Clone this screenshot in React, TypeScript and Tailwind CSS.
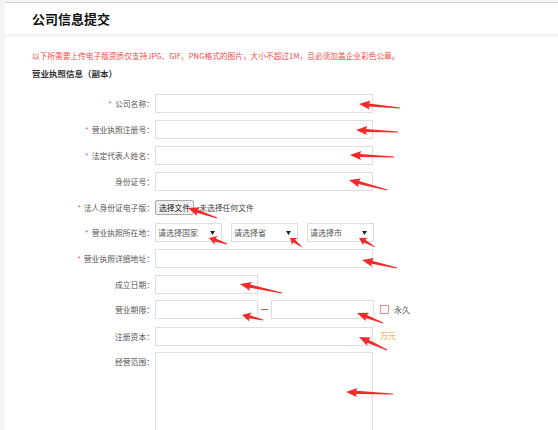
import React from 'react'

const font = { fontFamily: '"Noto Sans CJK SC", "Noto Sans", sans-serif' }

// 箭头：[尾x, 尾y, 尖x, 尖y]
const arrows: [number, number, number, number][] = [
  [400, 108, 359, 104],
  [398, 132, 356, 130],
  [394, 157, 350, 155],
  [387, 190, 349, 180],
  [217, 218, 188, 208],
  [227, 244, 209, 238],
  [302, 247, 290, 238],
  [375, 247, 359, 238],
  [397, 268, 362, 260],
  [282, 293, 240, 284],
  [263, 320, 242, 315],
  [383, 323, 357, 313],
  [387, 350, 359, 337],
  [393, 394, 346, 392],
]

function arrowPoints([tx, ty, px, py]: [number, number, number, number]) {
  const dx = px - tx
  const dy = py - ty
  const len = Math.hypot(dx, dy)
  const ux = dx / len
  const uy = dy / len
  const nx = -uy
  const ny = ux
  const head = Math.min(11, len * 0.4)
  const bx = px - ux * head
  const by = py - uy * head
  const pts = [
    [tx + nx * 0.4, ty + ny * 0.4],
    [bx + ux * 1 + nx * 1.6, by + uy * 1 + ny * 1.6],
    [bx + nx * 4.5, by + ny * 4.5],
    [px, py],
    [bx - nx * 4.5, by - ny * 4.5],
    [bx + ux * 1 - nx * 1.6, by + uy * 1 - ny * 1.6],
    [tx - nx * 0.4, ty - ny * 0.4],
  ]
  return pts.map((p) => `${p[0].toFixed(1)},${p[1].toFixed(1)}`).join(' ')
}

function Label({ text, required }: { text: string; required?: boolean }) {
  return (
    <div className="w-[149px] shrink-0 text-right text-[7.8px] leading-[19px] text-[#555]">
      {required && <span className="text-[#f35b5b] mr-[3px]">*</span>}
      {text}：
    </div>
  )
}

function Input({ w = 'w-[218px]' }: { w?: string }) {
  return <div className={`${w} h-[19px] border border-[#dedede] bg-white`} />
}

function Select({ text, w }: { text: string; w: string }) {
  return (
    <div className={`${w} h-[19px] border border-[#dedede] bg-white flex items-center justify-between pl-[2px] pr-[6px] text-[8px] text-[#555]`}>
      <span>{text}</span>
      <svg width="5" height="4" viewBox="0 0 5 4">
        <polygon points="0,0 5,0 2.5,4" fill="#222" />
      </svg>
    </div>
  )
}

export default function App() {
  return (
    <div className="relative w-[558px] h-[430px] overflow-hidden bg-[#f4f4f4] pt-[2px]" style={font}>
      <div className="ml-[5px] border-t border-[#d4d4d4]">
        <div className="bg-white h-[31px] pl-[27px] flex items-center">
          <h1 className="text-[13px] font-bold text-[#111] leading-none">公司信息提交</h1>
        </div>
        <div className="bg-white mt-[3px] h-[400px] pt-[12px]">
          <p className="pl-[27px] text-[7.7px] leading-[14px] text-[#f34a4a]">
            以下所需要上传电子版资质仅支持JPG、GIF、PNG格式的图片，大小不超过1M，且必须加盖企业彩色公章。
          </p>
          <p className="pl-[27px] mt-[3px] text-[8.5px] leading-[14px] font-bold text-[#333]">营业执照信息（副本）</p>

          <div className="mt-[14px] flex flex-col">
            <div className="flex items-center gap-[1px]">
              <Label text="公司名称" required />
              <Input />
            </div>
            <div className="flex items-center gap-[1px] mt-[7px]">
              <Label text="营业执照注册号" required />
              <Input />
            </div>
            <div className="flex items-center gap-[1px] mt-[7px]">
              <Label text="法定代表人姓名" required />
              <Input />
            </div>
            <div className="flex items-center gap-[1px] mt-[7px]">
              <Label text="身份证号" />
              <Input />
            </div>
            <div className="flex items-center gap-[1px] mt-[7px] h-[19px]">
              <Label text="法人身份证电子版" required />
              <div className="flex items-center">
                <div className="h-[15px] px-[3px] border border-[#a9a9a9] rounded-[2px] bg-[#efefef] text-[7.8px] leading-[13px] text-[#222]">选择文件</div>
                <span className="ml-[5px] text-[7.8px] text-[#444]">未选择任何文件</span>
              </div>
            </div>
            <div className="flex items-center gap-[1px] mt-[6px]">
              <Label text="营业执照所在地" required />
              <div className="flex">
                <Select text="请选择国家" w="w-[67px]" />
                <Select text="请选择省" w="w-[67px] ml-[9px]" />
                <Select text="请选择市" w="w-[67px] ml-[9px]" />
              </div>
            </div>
            <div className="flex items-center gap-[1px] mt-[7px]">
              <Label text="营业执照详细地址" required />
              <Input />
            </div>
            <div className="flex items-center gap-[1px] mt-[7px]">
              <Label text="成立日期" />
              <Input w="w-[103px]" />
            </div>
            <div className="flex items-center gap-[1px] mt-[6px]">
              <Label text="营业期限" />
              <Input w="w-[103px]" />
              <span className="w-[11px] flex justify-center">
                <span className="w-[7px] h-px bg-[#777]" />
              </span>
              <Input w="w-[103px]" />
              <span className="ml-[5px] w-[9px] h-[9px] border border-[#ee8a8a] bg-white" />
              <span className="ml-[4px] text-[8px] text-[#555]">永久</span>
            </div>
            <div className="flex items-center gap-[1px] mt-[8px]">
              <Label text="注册资本" />
              <Input />
              <span className="ml-[6px] -mt-[2px] text-[8px] text-[#f0a030]">万元</span>
            </div>
            <div className="flex items-start gap-[1px] mt-[6px]">
              <Label text="经营范围" />
              <div className="w-[218px] h-[90px] border border-[#dedede] bg-white" />
            </div>
          </div>
        </div>
      </div>

      <svg className="absolute inset-0 pointer-events-none" width="558" height="430" viewBox="0 0 558 430">
        {arrows.map((a, i) => (
          <polygon key={i} points={arrowPoints(a)} fill="#f32a2a" />
        ))}
      </svg>
    </div>
  )
}
